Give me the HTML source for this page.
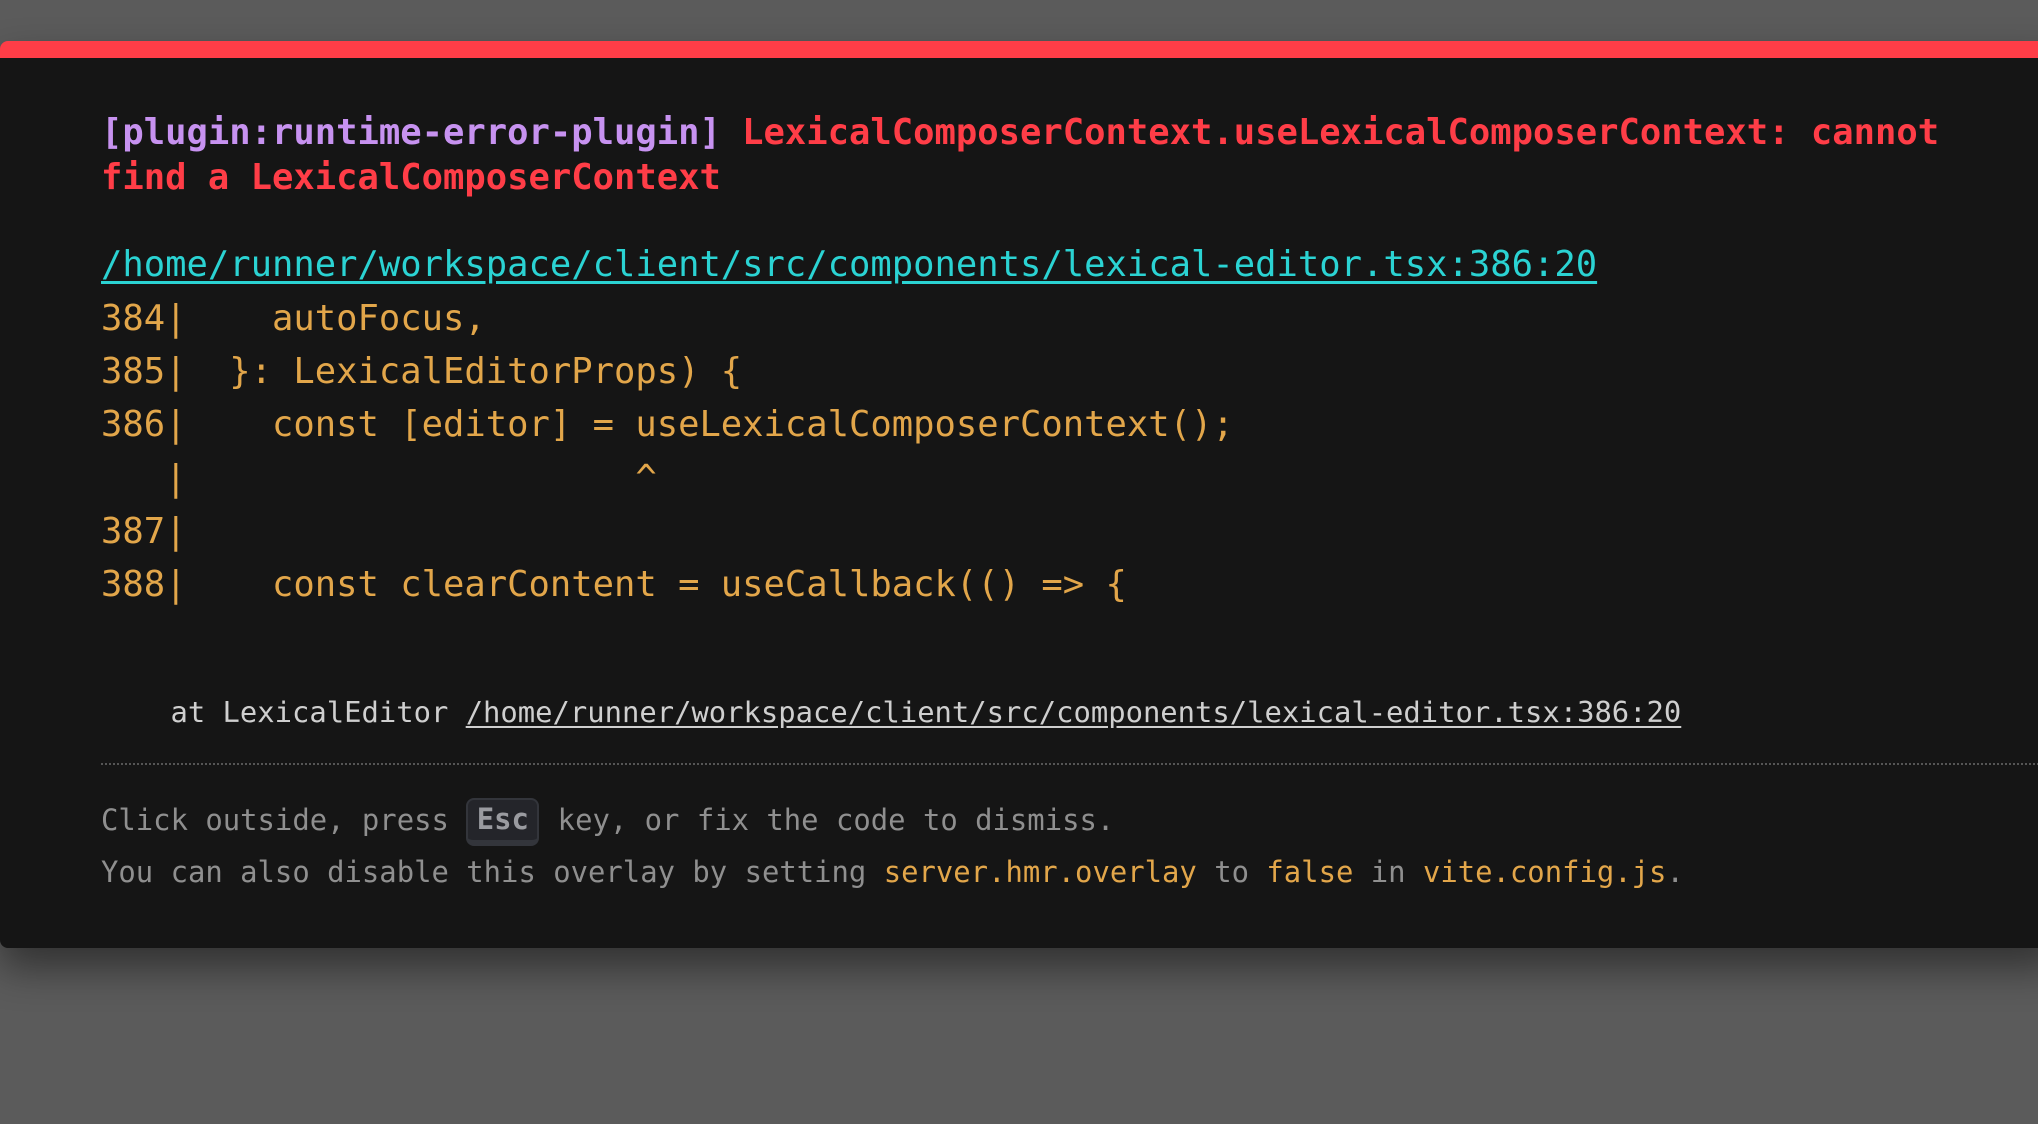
<!DOCTYPE html>
<html><head><meta charset="utf-8"><style>
html,body{margin:0;padding:0;width:2038px;height:1124px;overflow:hidden;background:#5b5b5b;}
.panel{position:absolute;left:0;top:41px;width:2060px;height:907px;background:#151515;border-top:17px solid #ff3d47;box-sizing:border-box;border-radius:8px 0 0 8px;box-shadow:0 20px 40px rgba(0,0,0,0.45);}
.l{position:absolute;left:101px;white-space:pre;font-family:"DejaVu Sans Mono","Liberation Mono",monospace;}
.h{font-size:35.5px;font-weight:bold;line-height:46px;color:#ff3d47;}
.p{color:#c792f0;}
.c{font-size:35.5px;line-height:53px;color:#e2a64a;}
.lk{font-size:35.5px;line-height:53px;color:#2bd3d3;text-decoration:underline;text-underline-offset:5px;}
.at{font-size:28.85px;line-height:40px;color:#cfcfcf;}
.at u{text-underline-offset:4px;}
.f{font-size:28.9px;line-height:52px;color:#8f8f8f;}
.y{color:#e2a64a;}
.kbd{display:inline-block;width:73px;height:48px;box-sizing:border-box;background:#24252a;border:2px solid #33353b;border-bottom-width:6px;border-radius:8px;color:#9a9ba0;font-weight:bold;text-align:center;line-height:38px;vertical-align:middle;margin-right:1px;}
.dot{position:absolute;left:101px;top:763px;width:1990px;border-top:2px dotted #555;}
</style></head><body>
<div class="panel"></div>
<div class="l h" style="top:110px"><span class="p">[plugin:runtime-error-plugin]</span> LexicalComposerContext.useLexicalComposerContext: cannot</div>
<div class="l h" style="top:155px">find a LexicalComposerContext</div>
<div class="l lk" style="top:238px">/home/runner/workspace/client/src/components/lexical-editor.tsx:386:20</div>
<div class="l c" style="top:292px">384|    autoFocus,</div>
<div class="l c" style="top:345px">385|  }: LexicalEditorProps) {</div>
<div class="l c" style="top:398px">386|    const [editor] = useLexicalComposerContext();</div>
<div class="l c" style="top:452px">   |                     ^</div>
<div class="l c" style="top:505px">387|</div>
<div class="l c" style="top:558px">388|    const clearContent = useCallback(() =&gt; {</div>
<div class="l at" style="top:692px">    at LexicalEditor <u>/home/runner/workspace/client/src/components/lexical-editor.tsx:386:20</u></div>
<div class="dot"></div>
<div class="l f" style="top:794px">Click outside, press <span class="kbd">Esc</span> key, or fix the code to dismiss.</div>
<div class="l f" style="top:846px">You can also disable this overlay by setting <span class="y">server.hmr.overlay</span> to <span class="y">false</span> in <span class="y">vite.config.js</span>.</div>
</body></html>
